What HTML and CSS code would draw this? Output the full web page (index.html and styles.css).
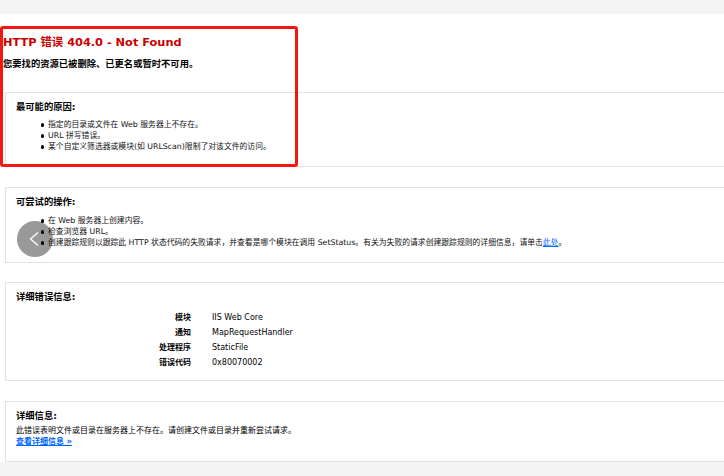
FILE: index.html
```html
<!DOCTYPE html>
<html lang="zh-CN">
<head>
<meta charset="utf-8">
<title>HTTP 错误 404.0 - Not Found</title>
<link rel="stylesheet" href="styles.css">
</head>
<body>
<div class="topbar"></div>
<main class="page">
  <header class="head">
    <h1>HTTP 错误 404.0 - Not Found</h1>
    <h2>您要找的资源已被删除、已更名或暂时不可用。</h2>
  </header>
  <section class="box box-causes">
    <h3>最可能的原因:</h3>
    <ul>
      <li>指定的目录或文件在 Web 服务器上不存在。</li>
      <li>URL 拼写错误。</li>
      <li>某个自定义筛选器或模块(如 URLScan)限制了对该文件的访问。</li>
    </ul>
  </section>
  <section class="box box-try">
    <h3>可尝试的操作:</h3>
    <ul>
      <li>在 Web 服务器上创建内容。</li>
      <li>检查浏览器 URL。</li>
      <li>创建跟踪规则以跟踪此 HTTP 状态代码的失败请求，并查看是哪个模块在调用 SetStatus。有关为失败的请求创建跟踪规则的详细信息，请单击<a href="#">此处</a>。</li>
    </ul>
  </section>
  <section class="box box-detail">
    <h3>详细错误信息:</h3>
    <dl class="details">
      <dt>模块</dt><dd>IIS Web Core</dd>
      <dt>通知</dt><dd>MapRequestHandler</dd>
      <dt>处理程序</dt><dd>StaticFile</dd>
      <dt>错误代码</dt><dd>0x80070002</dd>
    </dl>
  </section>
  <section class="box box-info">
    <h3>详细信息:</h3>
    <p>此错误表明文件或目录在服务器上不存在。请创建文件或目录并重新尝试请求。</p>
    <p><a class="more" href="#">查看详细信息 »</a></p>
  </section>
</main>
<div class="bottombar"></div>
<div class="highlight"></div>
<div class="back">
  <svg width="36" height="36" viewBox="0 0 36 36"><path d="M21 11.5 L13.5 18 L21 24.5" fill="none" stroke="#fff" stroke-width="1.3"/></svg>
</div>
</body>
</html>
```
FILE: styles.css
```css
html, body { margin: 0; padding: 0; }
body {
  position: relative;
  width: 724px;
  height: 476px;
  overflow: hidden;
  background: #fff;
  color: #000;
  font-family: "DejaVu Sans", "Noto Sans CJK SC", sans-serif;
  font-size: 8px;
}
.topbar { height: 14px; background: #f4f4f4; }
.bottombar { height: 14px; background: #f4f4f4; }
.page { position: relative; z-index: 1; height: 448px; overflow: hidden; padding-left: 3px; }
.head { height: 78px; padding-top: 20px; box-sizing: border-box; }
h1 { margin: 0; font-size: 11.35px; line-height: 16px; color: #c00; font-weight: bold; letter-spacing: 0; }
h2 { margin: 7px 0 0; font-size: 9.3px; line-height: 13px; font-weight: bold; }
.box {
  box-sizing: border-box;
  width: 800px;
  margin-left: 2px;
  border: 1px solid #e2e2e2;
  padding: 8px 0 0 10px;
}
h3 { margin: 0; font-size: 9.3px; line-height: 12px; font-weight: bold; }
ul { margin: 6px 0 0; padding: 0 0 0 32px; color: #111; list-style: none; }
li { position: relative; line-height: 11px; white-space: nowrap; font-size: 7.82px; }
li::before {
  content: "";
  position: absolute;
  left: -7.5px; top: 4px;
  width: 3.5px; height: 3.5px;
  border-radius: 50%;
  background: #000;
}
a { color: #06f; text-decoration: underline; }
.box-causes { height: 75px; }
.box-try { height: 76px; margin-top: 20px; }
.box-try ul { margin-top: 7px; }
.box-detail { height: 99px; margin-top: 19px; }
.box-info { height: 61px; margin-top: 20px; }
.details {
  display: grid;
  grid-template-columns: 175px 1fr;
  column-gap: 21px;
  margin: 7px 0 0;
  line-height: 15px;
}
dt { text-align: right; font-weight: bold; }
dd { margin: 0; }
.box-info h3 { margin-bottom: 3px; }
.box-info p { margin: 0; line-height: 11px; }
.more { font-weight: bold; }
.highlight {
  position: absolute;
  z-index: 2;
  left: 0; top: 26px;
  width: 298px; height: 141px;
  box-sizing: border-box;
  border: 3px solid #f5170f;
  border-radius: 3px;
}
.back {
  position: absolute;
  left: 17px; top: 221px;
  width: 36px; height: 36px;
  border-radius: 50%;
  background: #999;
}
.back svg { display: block; }
```
